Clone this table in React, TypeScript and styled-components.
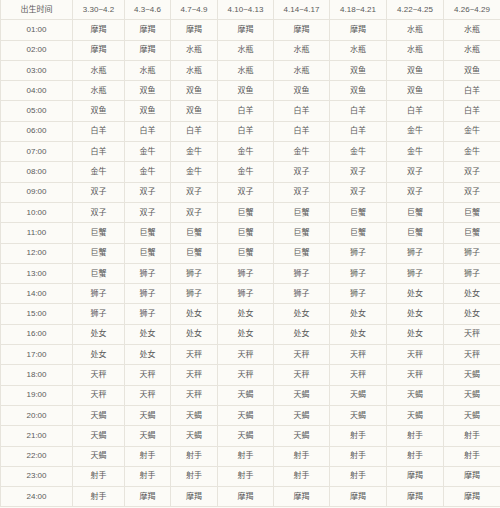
import * as React from 'react';
import styled, { createGlobalStyle } from 'styled-components';

const GlobalStyle = createGlobalStyle`
    html, body {
        margin: 0;
        padding: 0;
        background: #fcfbf7;
        overflow: hidden;
    }
`;

const Page = styled.div`
    width: 500px;
    height: 508px;
    overflow: hidden;
    background: #fcfbf7;
`;

const Table = styled.table`
    width: 500px;
    margin-top: -1px;
    table-layout: fixed;
    border-collapse: collapse;
    font-family: 'Liberation Sans', 'Noto Sans CJK SC', sans-serif;
    font-size: 8px;
    color: #5a5a5a;
`;

const Row = styled.tr`
    height: 20.3px;
`;

const Cell = styled.td`
    padding: 0;
    text-align: center;
    vertical-align: middle;
    border: 1px solid #e7e4dc;
    white-space: nowrap;
    line-height: 1;
`;

const HeadCell = styled(Cell).attrs({ as: 'th' })`
    font-weight: normal;
`;

const widths = [72, 52, 46, 47, 56, 56, 57, 57, 57];

const header = [
    '出生时间',
    '3.30~4.2',
    '4.3~4.6',
    '4.7~4.9',
    '4.10~4.13',
    '4.14~4.17',
    '4.18~4.21',
    '4.22~4.25',
    '4.26~4.29',
];

const rows = [
    '摩羯 摩羯 摩羯 摩羯 摩羯 摩羯 水瓶 水瓶',
    '摩羯 摩羯 水瓶 水瓶 水瓶 水瓶 水瓶 水瓶',
    '水瓶 水瓶 水瓶 水瓶 水瓶 双鱼 双鱼 双鱼',
    '水瓶 双鱼 双鱼 双鱼 双鱼 双鱼 双鱼 白羊',
    '双鱼 双鱼 双鱼 白羊 白羊 白羊 白羊 白羊',
    '白羊 白羊 白羊 白羊 白羊 白羊 金牛 金牛',
    '白羊 金牛 金牛 金牛 金牛 金牛 金牛 金牛',
    '金牛 金牛 金牛 金牛 双子 双子 双子 双子',
    '双子 双子 双子 双子 双子 双子 双子 双子',
    '双子 双子 双子 巨蟹 巨蟹 巨蟹 巨蟹 巨蟹',
    '巨蟹 巨蟹 巨蟹 巨蟹 巨蟹 巨蟹 巨蟹 巨蟹',
    '巨蟹 巨蟹 巨蟹 巨蟹 巨蟹 狮子 狮子 狮子',
    '巨蟹 狮子 狮子 狮子 狮子 狮子 狮子 狮子',
    '狮子 狮子 狮子 狮子 狮子 狮子 处女 处女',
    '狮子 狮子 处女 处女 处女 处女 处女 处女',
    '处女 处女 处女 处女 处女 处女 处女 天秤',
    '处女 处女 天秤 天秤 天秤 天秤 天秤 天秤',
    '天秤 天秤 天秤 天秤 天秤 天秤 天秤 天蝎',
    '天秤 天秤 天秤 天蝎 天蝎 天蝎 天蝎 天蝎',
    '天蝎 天蝎 天蝎 天蝎 天蝎 天蝎 天蝎 天蝎',
    '天蝎 天蝎 天蝎 天蝎 天蝎 射手 射手 射手',
    '天蝎 射手 射手 射手 射手 射手 射手 射手',
    '射手 射手 射手 射手 射手 射手 摩羯 摩羯',
    '射手 摩羯 摩羯 摩羯 摩羯 摩羯 摩羯 摩羯',
].map(r => r.split(' '));

const hour = (i: number) => `${String(i + 1).padStart(2, '0')}:00`;

export default function App() {
    return (
        <Page>
            <GlobalStyle />
            <Table>
                <colgroup>
                    {widths.map((w, i) => (
                        <col key={i} style={{ width: w }} />
                    ))}
                </colgroup>
                <thead>
                    <Row>
                        {header.map(h => (
                            <HeadCell key={h}>{h}</HeadCell>
                        ))}
                    </Row>
                </thead>
                <tbody>
                    {rows.map((signs, i) => (
                        <Row key={i}>
                            <Cell>{hour(i)}</Cell>
                            {signs.map((s, j) => (
                                <Cell key={j}>{s}</Cell>
                            ))}
                        </Row>
                    ))}
                </tbody>
            </Table>
        </Page>
    );
}
